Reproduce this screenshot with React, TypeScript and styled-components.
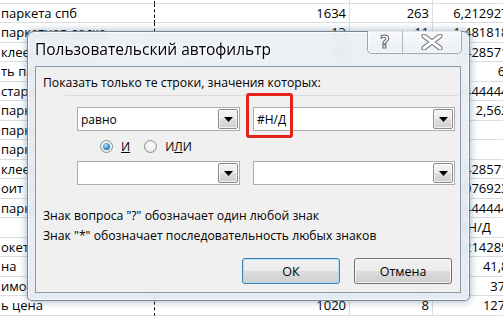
import React from 'react';
import styled, { createGlobalStyle } from 'styled-components';

const GlobalStyle = createGlobalStyle`
  html, body {
    margin: 0;
    padding: 0;
    background: #fff;
    overflow: hidden;
  }
  body {
    width: 503px;
    height: 316px;
    position: relative;
  }
`;

// ---------- spreadsheet behind the dialog ----------

const Sheet = styled.div`
  margin-top: -16px;
  width: 520px;
  font-family: "Open Sans", "Noto Sans", sans-serif;
  font-size: 13px;
  color: #000;
`;

const SheetRow = styled.div`
  display: grid;
  grid-template-columns: 155px 195px 83px 87px;
  height: 19.5px;
`;

const Cell = styled.div<{ $align?: 'left' | 'right' | 'center'; $pageBreak?: boolean }>`
  box-sizing: border-box;
  border-bottom: 1px solid #dadcdd;
  border-right: 1px ${p => (p.$pageBreak ? 'dashed #000' : 'solid #dadcdd')};
  padding: 0 3px 0 1px;
  text-align: ${p => p.$align || 'right'};
  line-height: 18.5px;
  white-space: nowrap;
  overflow: hidden;
`;

const rows: [string, string, string, string][] = [
  ['', '', '', ''],
  ['паркета спб', '1634', '263', '6,2129278'],
  ['паркетная доска', '13', '11', '1,4818182'],
  ['клеевой паркет', '10', '7', '1,4285714'],
  ['ть паркет', '13', '2', '6,5'],
  ['старый паркет', '40', '9', '4,4444444'],
  ['паркет дуб', '41', '16', '2,5625'],
  ['паркет ясень', '', '', ''],
  ['паркетная доска', '', '', ''],
  ['клеевой паркет', '10', '7', '1,4285714'],
  ['оит паркет', '40', '13', '3,0769231'],
  ['паркет цена', '40', '9', '4,4444444'],
  ['', '13', '0', '#Н/Д'],
  ['окет', '90', '28', '3,2142857'],
  ['на', '251', '6', '41,85'],
  ['имо', '75', '2', '37,5'],
  ['ь цена', '1020', '8', '127,5'],
];

// ---------- dialog window ----------

const Window = styled.div`
  position: absolute;
  left: 27px;
  top: 31px;
  width: 443px;
  height: 270px;
  box-sizing: border-box;
  display: flex;
  flex-direction: column;
  border: 1px solid rgba(40, 50, 62, 0.55);
  border-radius: 7px 7px 5px 5px;
  background: linear-gradient(rgba(234, 239, 245, 0.9), rgba(224, 232, 241, 0.88));
  backdrop-filter: blur(4px);
  box-shadow: inset 0 0 0 1px rgba(255, 255, 255, 0.65), 0 0 7px 1px rgba(70, 110, 150, 0.45);
  font-family: "Open Sans", "Noto Sans", sans-serif;
  color: #000;
`;

const TitleBar = styled.div`
  height: 34px;
  display: flex;
  align-items: flex-start;
  padding-left: 7px;
`;

const Title = styled.div`
  font-size: 15.5px;
  line-height: 34px;
  text-shadow: 0 0 6px #fff, 0 0 3px #fff;
`;

const CaptionButtons = styled.div`
  margin: -1px 7px 0 auto;
  height: 23px;
  display: flex;
  box-sizing: border-box;
  border: 1px solid rgba(60, 70, 80, 0.45);
  border-top: none;
  border-radius: 0 0 5px 5px;
  background: linear-gradient(rgba(255, 255, 255, 0.55), rgba(235, 240, 245, 0.35));
  box-shadow: inset 0 0 0 1px rgba(255, 255, 255, 0.6);
  overflow: hidden;
`;

const CaptionButton = styled.div<{ $w: number }>`
  width: ${p => p.$w}px;
  display: flex;
  align-items: center;
  justify-content: center;
  & + & {
    border-left: 1px solid rgba(60, 70, 80, 0.35);
  }
`;

const HelpGlyph = styled.span`
  font-family: "DejaVu Sans", sans-serif;
  font-weight: bold;
  font-size: 17px;
  line-height: 1;
  color: #fff;
  -webkit-text-stroke: 1px #666;
  margin-top: 1px;
`;

const ClientArea = styled.div`
  flex: 1;
  margin: 0 8px 7px 7px;
  box-sizing: border-box;
  border: 1px solid #8e99a4;
  background: #f0f0f0;
  display: flex;
  flex-direction: column;
  font-size: 12.2px;
`;

const Label = styled.div`
  margin: 8px 0 0 7px;
  line-height: 16px;
`;

const Separator = styled.div`
  margin: 4px 2px 0 29px;
  height: 1px;
  background: #dcdcdc;
`;

const ComboRow = styled.div<{ $top: number }>`
  display: flex;
  gap: 13px;
  margin-top: ${p => p.$top}px;
  padding-left: 41px;
`;

const Combo = styled.div<{ $w: number }>`
  width: ${p => p.$w}px;
  height: 24px;
  box-sizing: border-box;
  border: 1px solid #abadb3;
  background: #fff;
  display: flex;
  align-items: center;
  padding: 0 1px 0 3px;
  font-size: 12px;
`;

const ComboText = styled.span`
  flex: 1;
`;

const DropButton = styled.div`
  width: 20px;
  height: 20px;
  box-sizing: border-box;
  border: 1px solid #8a8a8a;
  border-radius: 2px;
  background: linear-gradient(#f4f4f4, #ebebeb 50%, #dddddd 50%, #cfcfcf);
  box-shadow: inset 0 0 0 1px rgba(255, 255, 255, 0.7);
  display: flex;
  align-items: center;
  justify-content: center;
`;

const RadioRow = styled.div`
  display: flex;
  align-items: center;
  height: 14px;
  margin-top: 8px;
  padding-left: 64px;
  gap: 14px;
`;

const RadioOption = styled.label`
  display: flex;
  align-items: center;
  gap: 8px;
  font-size: 12px;
`;

const RadioCircle = styled.span<{ $checked?: boolean }>`
  width: 13px;
  height: 13px;
  box-sizing: border-box;
  border-radius: 50%;
  border: 1px solid #8e8f8f;
  background: radial-gradient(circle at 50% 40%, #ffffff 0, #f0f0f0 50%, #d6d6d6 100%);
  display: flex;
  align-items: center;
  justify-content: center;
  &::after {
    content: '';
    display: ${p => (p.$checked ? 'block' : 'none')};
    width: 7px;
    height: 7px;
    border-radius: 50%;
    background: radial-gradient(circle at 40% 35%, #b9ecff 0, #3c9ee0 45%, #17528f 100%);
  }
`;

const Note = styled.div<{ $top: number }>`
  margin: ${p => p.$top}px 0 0 7px;
  line-height: 20px;
`;

const ButtonRow = styled.div`
  display: flex;
  justify-content: flex-end;
  gap: 14px;
  margin-top: 12px;
  padding-right: 8px;
`;

const Button = styled.button<{ $default?: boolean }>`
  width: 98px;
  height: 26px;
  box-sizing: border-box;
  font: inherit;
  font-size: 12.5px;
  color: #000;
  border-radius: 3px;
  border: 1px solid ${p => (p.$default ? '#3c7fb1' : '#707070')};
  background: linear-gradient(#f2f2f2, #ebebeb 50%, #dddddd 50%, #cfcfcf);
  box-shadow: inset 0 0 0 1px ${p => (p.$default ? '#aee0f8' : 'rgba(255,255,255,0.75)')};
  padding: 0;
`;

const Highlight = styled.div`
  position: absolute;
  left: 246px;
  top: 93px;
  width: 47px;
  height: 45px;
  box-sizing: border-box;
  border: 3px solid #e2231a;
  border-radius: 3px;
  pointer-events: none;
`;

const DownArrow = () => (
  <svg width="9" height="5" viewBox="0 0 9 5">
    <polygon points="0,0 9,0 4.5,5" fill="#000" />
  </svg>
);

const CloseGlyph = () => (
  <svg width="22" height="16" viewBox="0 0 22 16">
    <path d="M3 2 L19 14 M19 2 L3 14" stroke="#6a6a6a" strokeWidth="5" strokeLinecap="round" />
    <path d="M3 2 L19 14 M19 2 L3 14" stroke="#fff" strokeWidth="3" strokeLinecap="round" />
  </svg>
);

export default function App() {
  return (
    <>
      <GlobalStyle />
      <Sheet>
        {rows.map((r, i) => (
          <SheetRow key={i}>
            <Cell $align="left" $pageBreak>{r[0]}</Cell>
            <Cell>{r[1]}</Cell>
            <Cell>{r[2]}</Cell>
            <Cell $align={r[3].startsWith('#') ? 'center' : 'right'}>{r[3]}</Cell>
          </SheetRow>
        ))}
      </Sheet>

      <Window>
        <TitleBar>
          <Title>Пользовательский автофильтр</Title>
          <CaptionButtons>
            <CaptionButton $w={34}>
              <HelpGlyph>?</HelpGlyph>
            </CaptionButton>
            <CaptionButton $w={58}>
              <CloseGlyph />
            </CaptionButton>
          </CaptionButtons>
        </TitleBar>
        <ClientArea>
          <Label>Показать только те строки, значения которых:</Label>
          <Separator />
          <ComboRow $top={11}>
            <Combo $w={163}>
              <ComboText>равно</ComboText>
              <DropButton><DownArrow /></DropButton>
            </Combo>
            <Combo $w={202}>
              <ComboText>#Н/Д</ComboText>
              <DropButton><DownArrow /></DropButton>
            </Combo>
          </ComboRow>
          <RadioRow>
            <RadioOption>
              <RadioCircle $checked />
              <span><u>И</u></span>
            </RadioOption>
            <RadioOption>
              <RadioCircle />
              <span>И<u>Л</u>И</span>
            </RadioOption>
          </RadioRow>
          <ComboRow $top={8}>
            <Combo $w={163}>
              <ComboText />
              <DropButton><DownArrow /></DropButton>
            </Combo>
            <Combo $w={202}>
              <ComboText />
              <DropButton><DownArrow /></DropButton>
            </Combo>
          </ComboRow>
          <Note $top={21}>Знак вопроса "?" обозначает один любой знак</Note>
          <Note $top={0}>Знак "*" обозначает последовательность любых знаков</Note>
          <ButtonRow>
            <Button $default>ОК</Button>
            <Button>Отмена</Button>
          </ButtonRow>
        </ClientArea>
      </Window>
      <Highlight />
    </>
  );
}
